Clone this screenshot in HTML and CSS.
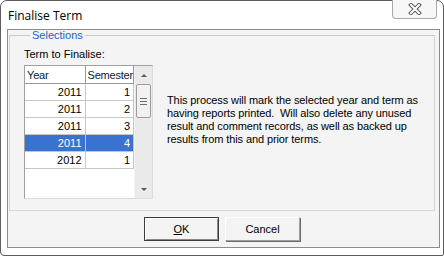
FILE: index.html
```html
<!DOCTYPE html>
<html lang="en">
<head>
  <meta charset="UTF-8">
  <title>Finalise Term</title>
  <link rel="stylesheet" href="styles.css">
</head>
<body>
  <div class="window">
    <div class="titlebar">
      <span class="title">Finalise Term</span>
      <div class="close-btn">
        <svg width="14" height="12" viewBox="0 0 14 12">
          <path d="M3 2 L11 10 M11 2 L3 10" stroke="#5b5b5b" stroke-width="4" stroke-linecap="square"/>
          <path d="M3 2 L11 10 M11 2 L3 10" stroke="#ffffff" stroke-width="2" stroke-linecap="square"/>
        </svg>
      </div>
    </div>

    <div class="client">
      <fieldset class="group">
        <legend>Selections</legend>
        <div class="group-body">
          <div class="picker">
            <label class="picker-label">Term to Finalise:</label>
            <div class="listbox">
              <div class="grid">
                <table>
                  <thead>
                    <tr><th class="col-year">Year</th><th class="col-sem">Semester</th></tr>
                  </thead>
                  <tbody>
                    <tr><td>2011</td><td>1</td></tr>
                    <tr><td>2011</td><td>2</td></tr>
                    <tr><td>2011</td><td>3</td></tr>
                    <tr class="selected"><td>2011</td><td>4</td></tr>
                    <tr><td>2012</td><td>1</td></tr>
                  </tbody>
                </table>
              </div>
              <div class="scrollbar">
                <div class="arrow arrow-up"></div>
                <div class="thumb">
                  <span></span><span></span><span></span>
                </div>
                <div class="track"></div>
                <div class="arrow arrow-down"></div>
              </div>
            </div>
          </div>
          <p class="info">This process will mark the selected year and term as having reports printed.&nbsp; Will also delete any unused result and comment records, as well as backed up results from this and prior terms.</p>
        </div>
      </fieldset>

      <div class="buttons">
        <button class="btn default"><u>O</u>K</button>
        <button class="btn">Cancel</button>
      </div>
    </div>
  </div>
</body>
</html>
```

FILE: styles.css
```css
body {
  margin: 0;
  background-color: #ffffff;
  font-family: 'Liberation Sans', Arial, sans-serif;
  font-size: 11px;
  color: #000;
}

.window {
  width: 444px;
  height: 256px;
  box-sizing: border-box;
  border: 1px solid #5e5e5e;
  border-radius: 7px 7px 2px 4px;
  background-color: #ffffff;
  display: flex;
  flex-direction: column;
}

.titlebar {
  height: 28px;
  display: flex;
  align-items: flex-start;
  justify-content: space-between;
}

.title {
  font-family: 'Open Sans', 'Noto Sans', sans-serif;
  font-size: 12px;
  margin: 6px 0 0 7px;
  color: #000;
}

.close-btn {
  width: 45px;
  height: 19px;
  margin: -1px 6px 0 0;
  box-sizing: border-box;
  border: 1px solid #a9a9a9;
  border-top: none;
  border-radius: 0 0 4px 4px;
  background-color: #f7f7f7;
  display: flex;
  align-items: center;
  justify-content: center;
}

.client {
  flex: 1;
  margin: 0 3px 7px 6px;
  border: 1px solid #8c8c8c;
  background-color: #f4f4f4;
  display: flex;
  flex-direction: column;
}

.group {
  margin: 0 4px 0 1px;
  padding: 5px 0 0 14px;
  height: 181px;
  box-sizing: border-box;
  border: 1px solid #d5d5d5;
  border-top-color: #c9c9c9;
}

.group legend {
  color: #1c63d1;
  padding: 0 2px;
  margin-left: 6px;
  font-size: 11px;
  line-height: 10px;
}

.group-body {
  display: flex;
  align-items: flex-start;
}

.picker {
  display: flex;
  flex-direction: column;
}

.picker-label {
  height: 20px;
  line-height: 18px;
}

.listbox {
  width: 129px;
  height: 134px;
  box-sizing: border-box;
  border: 1px solid #dcdcdc;
  border-top-color: #a0a0a0;
  border-left-color: #a0a0a0;
  background-color: #ffffff;
  display: flex;
}

.grid {
  width: 109px;
}

table {
  border-collapse: collapse;
  width: 109px;
}

th {
  height: 17px;
  padding: 0 0 0 2px;
  font-weight: normal;
  text-align: left;
  color: #0c1a3c;
  letter-spacing: -0.2px;
  border-right: 1px solid #9a9a9a;
  border-bottom: 1px solid #9a9a9a;
}

.col-year {
  width: 58px;
}

td {
  height: 16px;
  padding: 0 3px 0 0;
  text-align: right;
  border-right: 1px solid #c6c6c6;
  border-bottom: 1px solid #c6c6c6;
}

tr.selected td {
  background-color: #3a72d2;
  color: #ffffff;
}

.scrollbar {
  width: 18px;
  background-color: #eaeaea;
  border-left: 1px solid #f4f4f4;
  display: flex;
  flex-direction: column;
  align-items: center;
}

.arrow {
  width: 0;
  height: 0;
  border-left: 3px solid transparent;
  border-right: 3px solid transparent;
}

.arrow-up {
  margin: 8px 0 7px;
  border-bottom: 3px solid #5a5a5a;
}

.arrow-down {
  margin: 0 0 7px;
  border-top: 3px solid #5a5a5a;
}

.thumb {
  width: 15px;
  height: 34px;
  box-sizing: border-box;
  border: 1px solid #9c9c9c;
  border-radius: 2px;
  background-color: #f1f1f1;
  display: flex;
  flex-direction: column;
  align-items: center;
  justify-content: center;
  gap: 2px;
}

.thumb span {
  width: 7px;
  height: 1px;
  background-color: #6e6e6e;
}

.track {
  flex: 1;
}

.info {
  margin: 49px 0 0 14px;
  width: 262px;
  line-height: 13px;
  letter-spacing: -0.1px;
  color: #000;
}

.buttons {
  flex: 1;
  display: flex;
  justify-content: center;
  align-items: center;
  gap: 6px;
  padding-right: 3px;
}

.btn {
  width: 75px;
  height: 24px;
  font-family: 'Liberation Sans', Arial, sans-serif;
  font-size: 11px;
  color: #000;
  background-color: #f4f4f4;
  border: 1px solid #a0a0a0;
  border-top-color: #ffffff;
  border-left-color: #ffffff;
  box-shadow: 1px 1px 0 #6b6b6b;
  padding: 0;
}

.btn.default {
  border: 1px solid #3c3c3c;
  box-shadow: inset 1px 1px 0 #ffffff, inset -1px -1px 0 #8a8a8a;
}
```
